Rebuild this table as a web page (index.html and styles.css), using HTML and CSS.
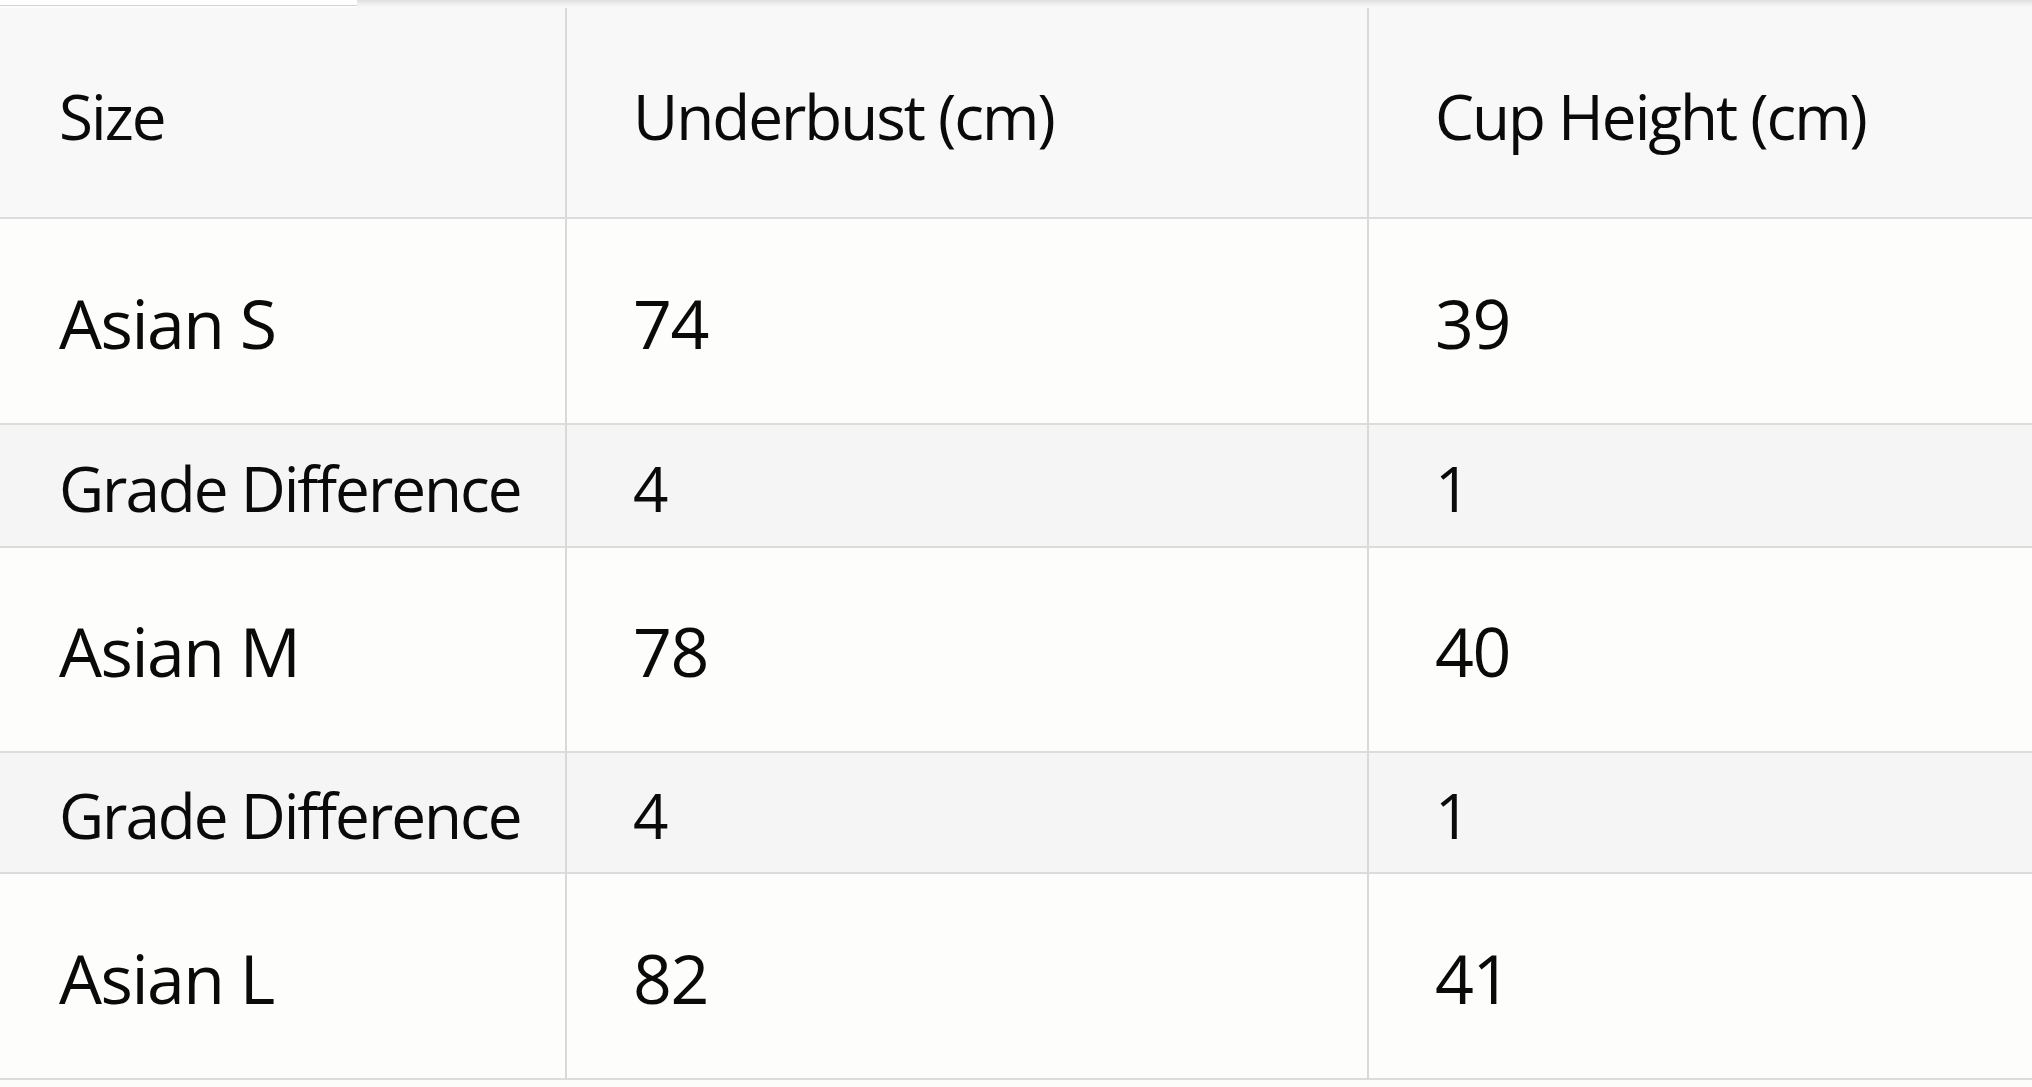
FILE: index.html
```html
<!DOCTYPE html>
<html lang="en">
<head>
<meta charset="utf-8">
<title>Size Chart</title>
<link rel="stylesheet" href="styles.css">
</head>
<body>
<div class="topbar">
  <div class="tab"></div>
  <div class="rest"></div>
</div>
<div class="chart">
  <div class="cell head first">Size</div>
  <div class="cell head">Underbust (cm)</div>
  <div class="cell head">Cup Height (cm)</div>

  <div class="cell size first">Asian S</div>
  <div class="cell size">74</div>
  <div class="cell size">39</div>

  <div class="cell grade first">Grade Difference</div>
  <div class="cell grade">4</div>
  <div class="cell grade">1</div>

  <div class="cell size first">Asian M</div>
  <div class="cell size">78</div>
  <div class="cell size">40</div>

  <div class="cell grade first">Grade Difference</div>
  <div class="cell grade">4</div>
  <div class="cell grade">1</div>

  <div class="cell size first">Asian L</div>
  <div class="cell size">82</div>
  <div class="cell size">41</div>
</div>
</body>
</html>
```

FILE: styles.css
```css
html, body {
  margin: 0;
  padding: 0;
  background: #fcfcfb;
  width: 2032px;
  height: 1087px;
  overflow: hidden;
}

body {
  font-family: "Open Sans", "Noto Sans", sans-serif;
  color: #0a0a0a;
}

.topbar {
  display: flex;
  height: 8px;
}

.topbar .tab {
  width: 357px;
  height: 5px;
  background: #ffffff;
  border-bottom: 1px solid #d4d4d4;
}

.topbar .rest {
  flex: 1;
  background: linear-gradient(#dedede, #ececec 40%, #f8f8f8 100%);
}

.chart {
  display: grid;
  grid-template-columns: 565px 802px 1fr;
  grid-template-rows: 211px 206px 123px 205px 121px 206px;
}

.cell {
  box-sizing: border-box;
  display: flex;
  align-items: center;
  padding-left: 66px;
  border-bottom: 2px solid #dcdcdc;
  border-left: 2px solid #d9d9d9;
  letter-spacing: -1.5px;
}

.cell.first {
  border-left: none;
  padding-left: 59px;
}

.head {
  background: #f8f8f8;
  font-size: 62px;
  letter-spacing: -2px;
  padding-top: 6px;
}

.size {
  background: #fdfdfc;
  font-size: 68px;
  padding-top: 2px;
}

.grade {
  background: #f5f5f5;
  font-size: 62px;
  letter-spacing: -2px;
  padding-top: 4px;
}
```
